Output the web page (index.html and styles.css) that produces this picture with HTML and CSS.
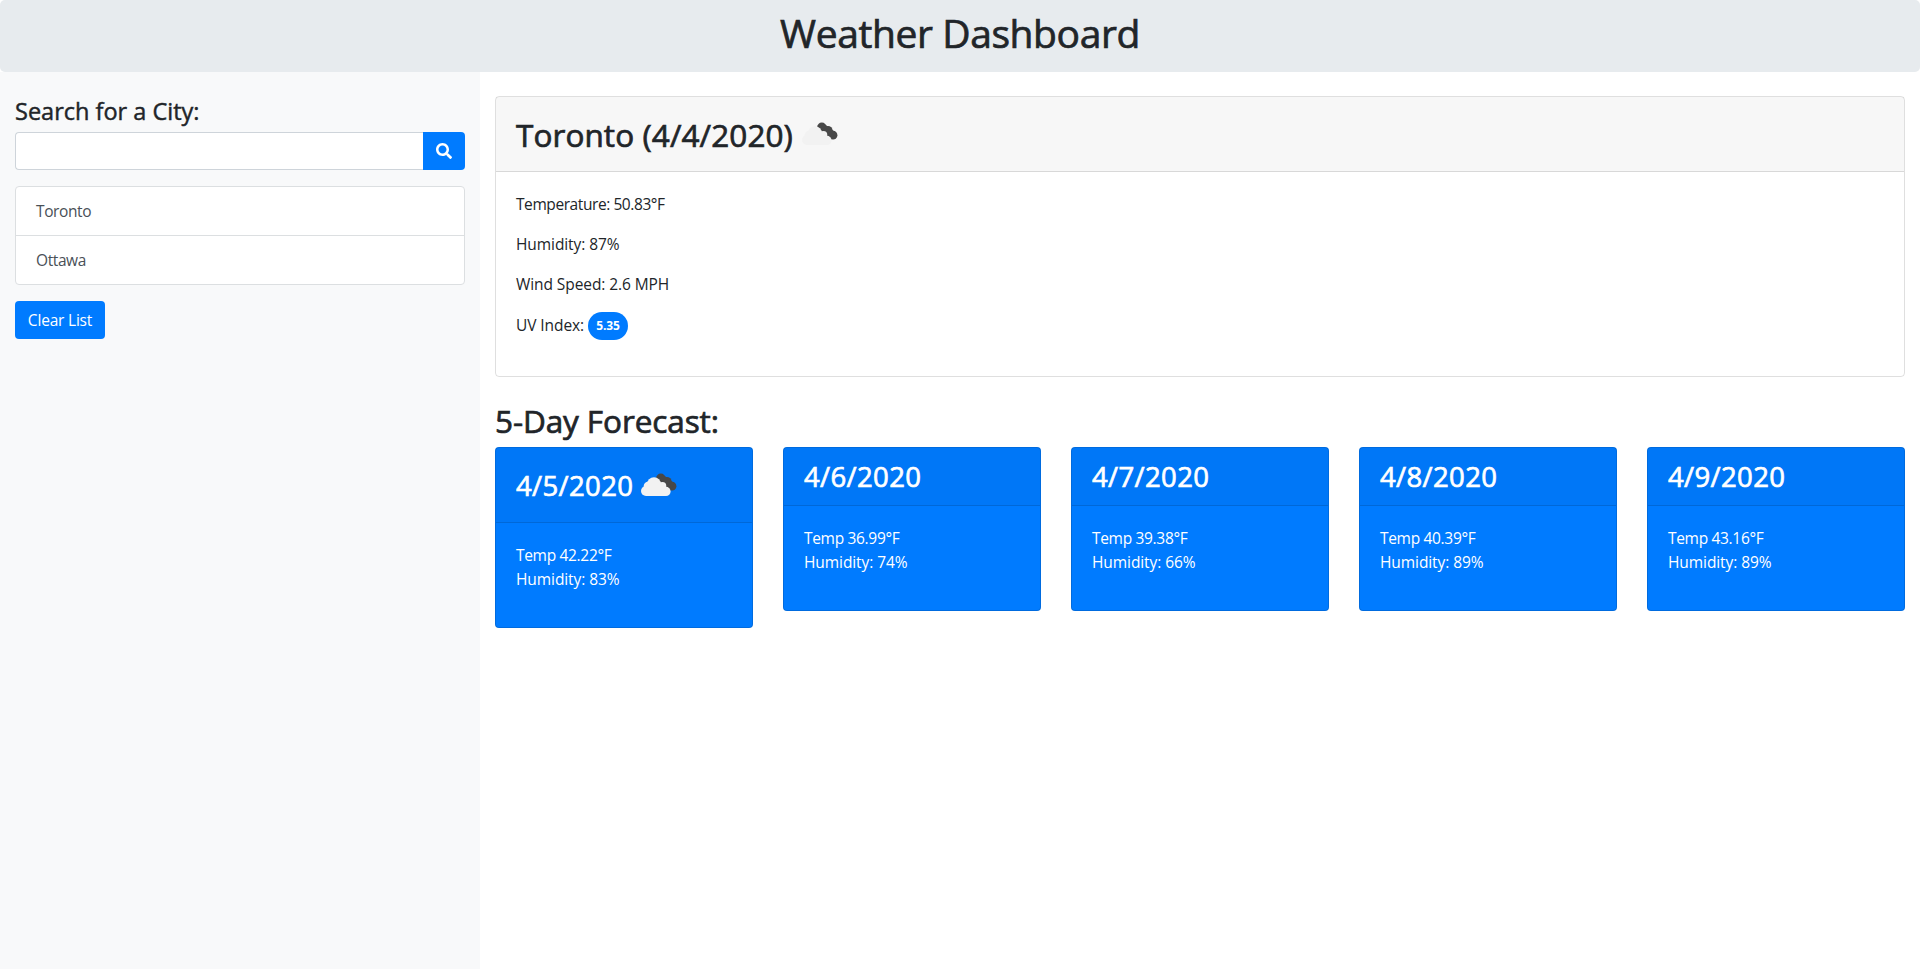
FILE: index.html
```html
<!DOCTYPE html>
<html lang="en">
<head>
<meta charset="utf-8">
<title>Weather Dashboard</title>
<link rel="stylesheet" href="styles.css">
</head>
<body>
<svg width="0" height="0" class="defs">
  <symbol id="clouds" viewBox="0 0 50 50">
    <g fill="#484848">
      <circle cx="26.800" cy="18.200" r="4.700"/><circle cx="33" cy="21.600" r="4.600"/><circle cx="38" cy="26.200" r="4.400"/>
      <path d="M22.800 19l6-4.500 12 9-4.500 7-6-4z"/>
    </g>
    <g fill="#f2f2f2">
      <circle cx="12" cy="31" r="5"/><circle cx="14" cy="26" r="4.300"/><circle cx="20" cy="24.300" r="7"/><circle cx="28.300" cy="26" r="4"/><circle cx="32" cy="31.400" r="4.600"/>
      <path d="M12 25h17l3 11H12z"/>
    </g>
  </symbol>
</svg>
<header class="banner"><h1>Weather Dashboard</h1></header>
<div class="layout">
  <aside class="sidebar">
    <h4>Search for a City:</h4>
    <form class="search">
      <input type="text" aria-label="City">
      <button type="button" class="btn btn-search" aria-label="Search"><svg width="16" height="16" viewBox="0 0 512 512"><path fill="currentColor" d="M505 442.700L405.300 343c-4.500-4.500-10.600-7-17-7H372c27.600-35.300 44-79.700 44-128C416 93.100 322.900 0 208 0S0 93.100 0 208s93.100 208 208 208c48.300 0 92.700-16.400 128-44v16.300c0 6.400 2.500 12.500 7 17l99.700 99.700c9.400 9.400 24.600 9.400 33.900 0l28.300-28.300c9.400-9.400 9.400-24.600.1-34zM208 336c-70.700 0-128-57.200-128-128 0-70.700 57.200-128 128-128 70.700 0 128 57.200 128 128 0 70.700-57.200 128-128 128z"/></svg></button>
    </form>
    <ul class="cities"><li>Toronto</li><li>Ottawa</li></ul>
    <button type="button" class="btn btn-clear">Clear List</button>
  </aside>
  <main class="content">
    <section class="card current">
      <div class="card-header"><h2>Toronto (4/4/2020)</h2><svg class="icon"><use href="#clouds"/></svg></div>
      <div class="card-body">
        <p class="temperature">Temperature: 50.83°F</p>
        <p>Humidity: 87%</p>
        <p>Wind Speed: 2.6 MPH</p>
        <p class="uv">UV Index:<b class="badge">5.35</b></p>
      </div>
    </section>
    <h2 class="title">5-Day Forecast:</h2>
    <section class="forecast">
      <article class="card day"><div class="card-header tall"><h3>4/5/2020</h3><svg class="icon"><use href="#clouds"/></svg></div><div class="card-body"><p class="temp">Temp 42.22°F</p><p>Humidity: 83%</p></div></article>
      <article class="card day"><div class="card-header"><h3>4/6/2020</h3></div><div class="card-body"><p class="temp">Temp 36.99°F</p><p>Humidity: 74%</p></div></article>
      <article class="card day"><div class="card-header"><h3>4/7/2020</h3></div><div class="card-body"><p class="temp">Temp 39.38°F</p><p>Humidity: 66%</p></div></article>
      <article class="card day"><div class="card-header"><h3>4/8/2020</h3></div><div class="card-body"><p class="temp">Temp 40.39°F</p><p>Humidity: 89%</p></div></article>
      <article class="card day"><div class="card-header"><h3>4/9/2020</h3></div><div class="card-body"><p class="temp">Temp 43.16°F</p><p>Humidity: 89%</p></div></article>
    </section>
  </main>
</div>
</body>
</html>
```
FILE: styles.css
```css
* { box-sizing: border-box; }
body {
  margin: 0;
  font: 400 15.5px/24px "Open Sans", "Noto Sans", sans-serif;
  color: #212529;
  background: #fff;
}
h1, h2, h3, h4, p, ul { margin: 0; padding: 0; font-weight: 400; white-space: nowrap; }
h1, h2, h3, h4 { -webkit-text-stroke: 0.7px currentColor; }
p { letter-spacing: -0.08px; }
.defs { position: absolute; }
.banner { height: 72px; padding-top: 9px; background: #e7ebee; border-radius: 5px; text-align: center; }
.banner h1 { font-size: 39px; line-height: 48px; letter-spacing: -0.4px; }
.layout { display: grid; grid-template-columns: 480px 1fr; height: 897px; }
.sidebar { background: #f8f9fa; padding: 25px 15px; }
.sidebar h4 { font-size: 23.500px; line-height: 28px; margin-bottom: 7px; -webkit-text-stroke-width: 0.45px; }
.search { display: flex; height: 38px; margin-bottom: 16px; }
.search input { flex: 1; border: 1px solid #ced4da; border-right: 0; border-radius: 4px 0 0 4px; background: #fff; }
.btn { border: 0; background: #007bff; color: #fff; font: inherit; height: 38px; padding: 0; }
.btn-search { width: 42px; border-radius: 0 4px 4px 0; display: flex; align-items: center; justify-content: center; }
.cities { list-style: none; border: 1px solid #dcdfe1; border-radius: 4px; background: #fff; margin-bottom: 16px; color: #495057; letter-spacing: -0.4px; }
.cities li { height: 48px; padding: 12px 20px; }
.cities li + li { height: 49px; border-top: 1px solid #dcdfe1; }
.btn-clear { width: 90px; border-radius: 4px; letter-spacing: -0.2px; }
.content { padding: 24px 15px; }
.card { border: 1px solid rgba(0,0,0,.125); border-radius: 4px; }
.card-header { display: flex; align-items: center; background: rgba(0,0,0,.03); border-bottom: 1px solid rgba(0,0,0,.125); padding: 0 20px; }
.icon { width: 50px; height: 50px; flex: none; }
.current { height: 281px; }
.current .card-header { height: 75px; }
h2 { font-size: 31.500px; line-height: 38px; letter-spacing: 0.08px; }
.current h2 { width: 279px; padding-top: 2px; }
.current .card-body { padding: 20px; }
.current p { margin-bottom: 16px; }
.current .temperature { letter-spacing: -0.42px; }
.current .uv { display: flex; align-items: center; height: 28px; margin-top: -1px; }
.badge { margin: 2px 0 0 4px; background: #007bff; color: #fff; font-size: 12px; line-height: 28px; height: 28px; width: 40px; text-align: center; border-radius: 14px; }
.title { margin: 24px 0 7px; padding-top: 1px; height: 39px; letter-spacing: -0.1px; }
.forecast { display: grid; grid-template-columns: repeat(5, 1fr); gap: 30px; align-items: start; }
.day { background: #007bff; color: #fff; }
.day .card-header { height: 58px; }
.day .tall { height: 75px; }
.day h3 { width: 118px; font-size: 27.500px; line-height: 34px; letter-spacing: 0.35px; padding-top: 1px; }
.day .tall h3 { padding-top: 2px; }
.day .card-body { padding: 20px; height: 104px; }
.day .temp { letter-spacing: -0.32px; }
```
